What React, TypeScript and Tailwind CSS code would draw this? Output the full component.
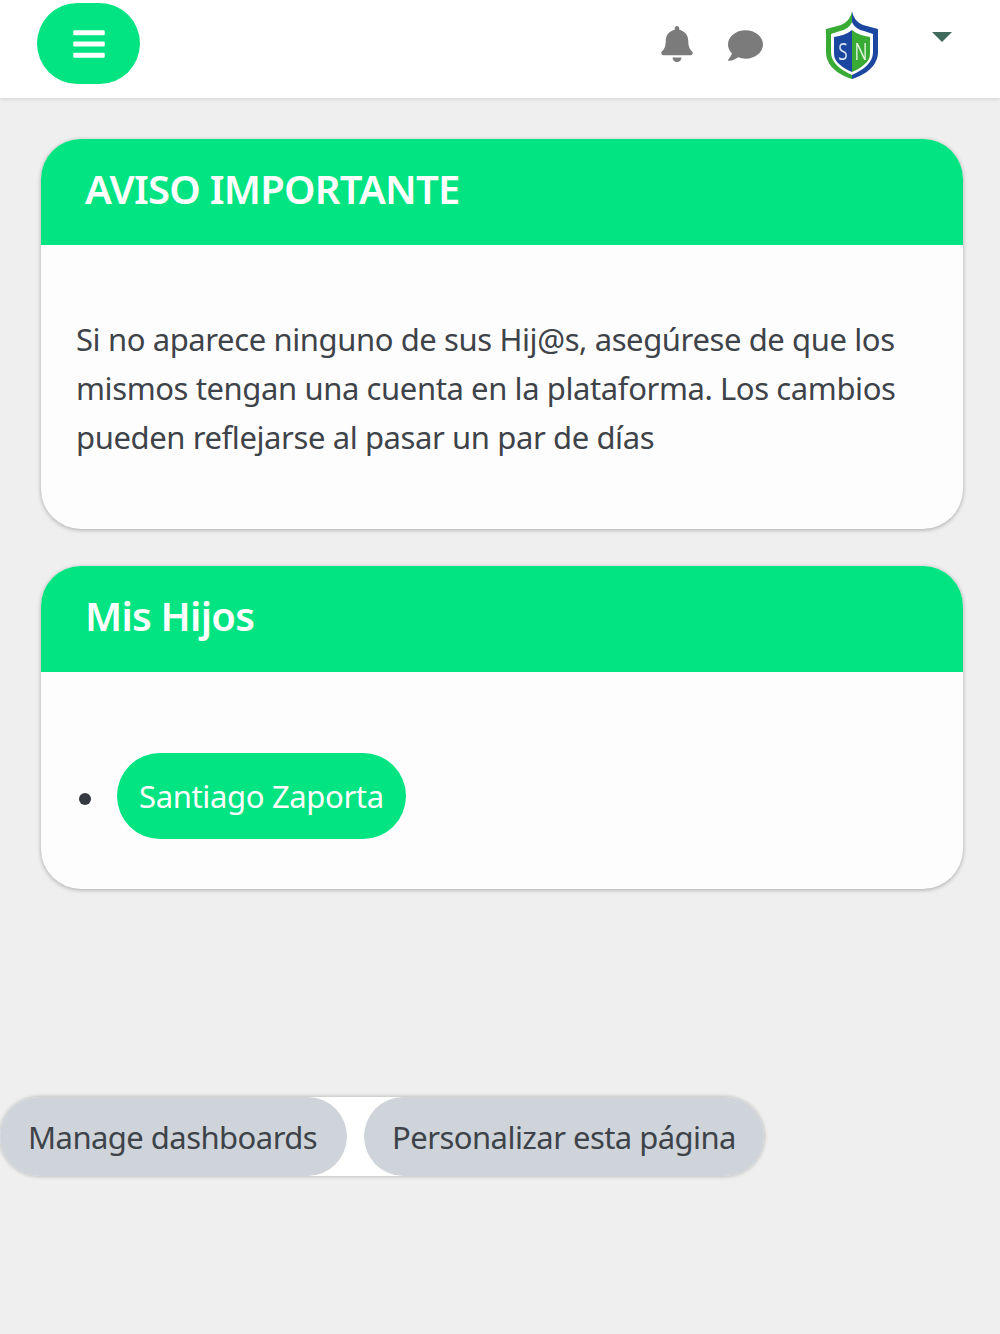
import { FaBars, FaBell, FaComment } from 'react-icons/fa';

const Shield = () => (
  <svg width="54" height="70" viewBox="0 0 54 70" className="blur-[0.6px]">
    <path d="M27 1 C28 8 33 13 38 15 L53 19 L53 42 C53 56 40 65 27 69 Z" fill="#1c47a0" />
    <path d="M27 1 C26 8 21 13 16 15 L1 19 L1 42 C1 56 14 65 27 69 Z" fill="#38ab35" />
    <path d="M27 12 C29 17 34 20 39 21 L48 24 L48 42 C48 53 38 60 27 65 C16 60 6 53 6 42 L6 24 L15 21 C20 20 25 17 27 12 Z" fill="#fff" />
    <path d="M27 20 C32 24 38 26 45 27 L45 44 C45 52 36 58 27 62 Z" fill="#38ab35" />
    <path d="M27 20 C22 24 16 26 9 27 L9 44 C9 52 18 58 27 62 Z" fill="#1c47a0" />
    <text x="24" y="50" fontSize="23" fill="#d7e3f5" textAnchor="middle" transform="scale(0.75 1)" fontFamily="'Open Sans', sans-serif">S</text>
    <text x="48" y="50" fontSize="23" fill="#dff3dc" textAnchor="middle" transform="scale(0.75 1)" fontFamily="'Open Sans', sans-serif">N</text>
  </svg>
);

const cardHead = 'bg-[#02e382] h-[106px] pb-[6px] px-[44px] flex items-center text-white text-[40px] font-semibold tracking-[-0.75px]';
const cardBox = 'bg-[#fdfdfd] rounded-[40px] overflow-hidden shadow-[0_1px_4px_rgba(0,0,0,0.3)]';

export default function App() {
  return (
    <div className="min-h-screen bg-[#efefef] font-['Noto_Sans','Open_Sans',sans-serif] text-[#3d4349]">
      <header className="h-[98px] bg-white shadow-[0_1px_4px_rgba(0,0,0,0.12)] flex items-start pl-[37px] pr-[48px]">
        <button className="mt-[3px] w-[103px] h-[81px] rounded-full bg-[#02e382] flex items-center justify-center text-white">
          <FaBars size={36} />
        </button>
        <div className="ml-auto flex items-start text-[#7b7b7b]">
          <FaBell size={36} className="mt-[26px]" />
          <FaComment size={35} className="mt-[28px] ml-[33px]" />
          <div className="mt-[10px] ml-[62px]"><Shield /></div>
          <div className="mt-[32px] ml-[53px] w-0 h-0 border-x-[10px] border-x-transparent border-t-[10px] border-t-[#3f6b5c]" />
        </div>
      </header>

      <main className="pl-[41px] pr-[37px] pt-[41px]">
        <section className={cardBox}>
          <div className={cardHead}>AVISO IMPORTANTE</div>
          <div className="h-[284px] pt-[70px] pl-[35px] pr-[30px] text-[31px] leading-[49px] tracking-[-0.4px]">
            Si no aparece ninguno de sus Hij@s, asegúrese de que los mismos tengan una cuenta en la plataforma. Los cambios pueden reflejarse al pasar un par de días
          </div>
        </section>

        <section className={`${cardBox} mt-[37px]`}>
          <div className={cardHead}>Mis Hijos</div>
          <div className="h-[217px] pt-[81px] pl-[38px] flex items-start">
            <span className="mt-[40px] w-[12px] h-[12px] rounded-full bg-[#343a40]" />
            <a className="ml-[26px] h-[86px] px-[22px] rounded-full bg-[#02e382] text-white text-[31px] tracking-[-0.35px] flex items-center">
              Santiago Zaporta
            </a>
          </div>
        </section>
      </main>

      <div className="mt-[208px] inline-flex bg-white rounded-full shadow-[0_0_4px_rgba(0,0,0,0.3)] text-[31px] tracking-[-0.55px]">
        <button className="h-[79px] pt-[2px] pl-[28px] pr-[30px] rounded-full bg-[#ced4da]">Manage dashboards</button>
        <button className="h-[79px] pt-[2px] ml-[17px] px-[28px] rounded-full bg-[#ced4da]">Personalizar esta página</button>
      </div>
    </div>
  );
}
